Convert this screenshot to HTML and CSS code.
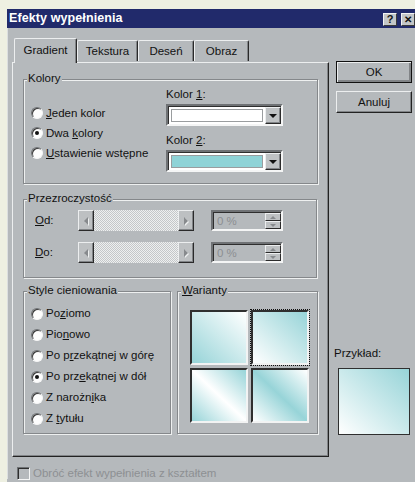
FILE: index.html
```html
<!DOCTYPE html>
<html lang="pl">
<head>
<meta charset="utf-8">
<title>Efekty wypełnienia</title>
<link rel="stylesheet" href="styles.css">
</head>
<body>
<div class="window">
  <div class="titlebar">
    <span class="title">Efekty wypełnienia</span>
    <span class="caption-btns">
      <span class="cbtn">?</span>
      <span class="cbtn close">✕</span>
    </span>
  </div>

  <div class="client">
    <div class="main">
      <div class="left">
        <div class="tabs">
          <div class="tab tab-gradient active">Gradient</div>
          <div class="tab tab-texture">Tekstura</div>
          <div class="tab tab-pattern">Deseń</div>
          <div class="tab tab-picture">Obraz</div>
        </div>

        <div class="panel">
          <div class="group colors">
            <span class="legend">Kolory</span>
            <div class="radios">
              <div class="opt"><span class="radio"></span><span><u>J</u>eden kolor</span></div>
              <div class="opt"><span class="radio on"></span><span>Dwa <u>k</u>olory</span></div>
              <div class="opt"><span class="radio"></span><span><u>U</u>stawienie wstępne</span></div>
            </div>
            <div class="pickers">
              <div class="pick-label">Kolor <u>1</u>:</div>
              <div class="combo">
                <div class="swatch white"></div>
                <div class="drop"><span class="tri-down"></span></div>
              </div>
              <div class="pick-label second">Kolor <u>2</u>:</div>
              <div class="combo">
                <div class="swatch cyan"></div>
                <div class="drop"><span class="tri-down"></span></div>
              </div>
            </div>
          </div>

          <div class="group transparency">
            <span class="legend">Przezroczystość</span>
            <div class="trow">
              <span class="tlabel"><u>O</u>d:</span>
              <div class="slider">
                <span class="sbtn"><span class="tri-left"></span></span>
                <span class="track"></span>
                <span class="sbtn"><span class="tri-right"></span></span>
              </div>
              <div class="spin">
                <span class="spin-text">0 %</span>
                <span class="spin-btns">
                  <span class="spbtn"><span class="tri-up"></span></span>
                  <span class="spbtn"><span class="tri-dn"></span></span>
                </span>
              </div>
            </div>
            <div class="trow">
              <span class="tlabel"><u>D</u>o:</span>
              <div class="slider">
                <span class="sbtn"><span class="tri-left"></span></span>
                <span class="track"></span>
                <span class="sbtn"><span class="tri-right"></span></span>
              </div>
              <div class="spin">
                <span class="spin-text">0 %</span>
                <span class="spin-btns">
                  <span class="spbtn"><span class="tri-up"></span></span>
                  <span class="spbtn"><span class="tri-dn"></span></span>
                </span>
              </div>
            </div>
          </div>

          <div class="bottom-row">
            <div class="group styles">
              <span class="legend">Style cieniowania</span>
              <div class="opt"><span class="radio"></span><span>Po<u>z</u>iomo</span></div>
              <div class="opt"><span class="radio"></span><span>Pio<u>n</u>owo</span></div>
              <div class="opt"><span class="radio"></span><span>Po p<u>r</u>zekątnej w górę</span></div>
              <div class="opt"><span class="radio on"></span><span>Po prz<u>e</u>kątnej w dół</span></div>
              <div class="opt"><span class="radio"></span><span>Z narożn<u>i</u>ka</span></div>
              <div class="opt"><span class="radio"></span><span>Z <u>t</u>ytułu</span></div>
            </div>
            <div class="group variants">
              <span class="legend"><u>W</u>arianty</span>
              <div class="tiles">
                <div class="cell"><div class="tile v1"></div></div>
                <div class="cell selected"><div class="tile v2"></div></div>
                <div class="cell"><div class="tile v3"></div></div>
                <div class="cell"><div class="tile v4"></div></div>
              </div>
            </div>
          </div>
        </div>
      </div>

      <div class="side">
        <div class="btn default">OK</div>
        <div class="btn">Anuluj</div>
        <div class="sample-label">Przykład:</div>
        <div class="sample"></div>
      </div>
    </div>

    <div class="check-row">
      <span class="checkbox"></span>
      <span class="disabled-text">Obróć efekt wypełnienia z kształtem</span>
    </div>
  </div>
</div>
</body>
</html>
```

FILE: styles.css
```css
html, body {
  margin: 0;
  height: 100%;
  overflow: hidden;
}

body {
  background: #eef0e2;
  padding: 9px 0 0 7px;
  box-sizing: border-box;
  font-family: "Liberation Sans", Arial, sans-serif;
  font-size: 11.5px;
  line-height: 13px;
  color: #111;
}

u { text-decoration: underline; text-underline-offset: 1px; }

.window {
  width: 410px;
  height: 480px;
  background: #b5b9bc;
}

/* caption bar */
.titlebar {
  height: 19px;
  background: #212a6b;
  display: flex;
  align-items: center;
  justify-content: space-between;
  padding: 0 2px 0 2px;
}

.title {
  color: #fff;
  font-weight: bold;
  font-size: 12.5px;
  letter-spacing: 0.1px;
}

.caption-btns {
  display: flex;
  gap: 4px;
  margin-top: 1px;
}

.cbtn {
  width: 14px;
  height: 13px;
  box-sizing: border-box;
  background: #c3c6c8;
  border: 1px solid;
  border-color: #f2f3f3 #3a3a3a #3a3a3a #f2f3f3;
  display: flex;
  align-items: center;
  justify-content: center;
  font-weight: bold;
  font-size: 11px;
  color: #111;
}

.cbtn.close { font-size: 10px; }

/* dialog client area */
.client {
  border-left: 1px solid #dcdfe0;
  padding: 10px 0 0 4px;
  height: 451px;
  box-sizing: border-box;
}

.main {
  display: flex;
  gap: 5px;
}

.left { width: 317px; }

/* tab strip */
.tabs {
  display: flex;
  align-items: flex-end;
  height: 24px;
  padding-left: 2px;
  position: relative;
  z-index: 1;
}

.tab {
  box-sizing: border-box;
  height: 21px;
  margin-bottom: 1px;
  border: 1px solid;
  border-bottom: none;
  border-color: #eceeef #2a2a2a #2a2a2a #eceeef;
  box-shadow: inset -1px 0 #818487;
  border-radius: 2px 2px 0 0;
  display: flex;
  align-items: center;
  justify-content: center;
  padding-top: 1px;
  background: #b5b9bc;
}

.tab.active {
  height: 25px;
  margin-bottom: -1px;
  padding-bottom: 2px;
}

.tab-gradient { width: 63px; }
.tab-texture { width: 61px; }
.tab-pattern { width: 56px; }
.tab-picture { width: 55px; }

.panel {
  box-sizing: border-box;
  height: 395px;
  border: 1px solid;
  border-color: #eceeef #222 #222 #eceeef;
  box-shadow: inset -1px -1px #818487;
  padding: 16px 0 0 10px;
}

/* etched group boxes */
.group {
  position: relative;
  box-sizing: border-box;
  border: 1px solid #85888b;
  box-shadow: inset 1px 1px #eef0f0, 1px 1px #eef0f0;
}

.legend {
  position: absolute;
  top: -8px;
  left: 3px;
  padding: 0 1px;
  background: #b5b9bc;
}

.colors {
  width: 295px;
  height: 105px;
  display: flex;
}

.radios {
  width: 135px;
  padding: 23px 0 0 7px;
}

.opt {
  height: 20px;
  display: flex;
  align-items: center;
  gap: 3px;
}

.radio {
  position: relative;
  width: 12px;
  height: 12px;
  box-sizing: border-box;
  border-radius: 50%;
  background: #fdfdfd;
  border: 1px solid;
  border-color: #6f7275 #f6f7f7 #f6f7f7 #6f7275;
  box-shadow: inset 1px 1px #3a3a3a;
}

.radio.on::after {
  content: "";
  position: absolute;
  left: 3px;
  top: 3px;
  width: 4px;
  height: 4px;
  border-radius: 50%;
  background: #111;
}

.pickers {
  padding-top: 8px;
}

.pick-label.second { margin-top: 8px; }

.combo {
  margin-top: 3px;
  width: 117px;
  height: 22px;
  box-sizing: border-box;
  border: 2px solid;
  border-color: #6f7275 #f4f5f5 #f4f5f5 #6f7275;
  box-shadow: inset 1px 1px #2e2e2e;
  background: #fff;
  display: flex;
  padding: 2px 0 0 2px;
}

.swatch {
  flex: 1;
  margin: 1px 2px 2px 1px;
  border: 1px solid #9a9d9f;
}

.swatch.white { background: #fff; }
.swatch.cyan { background: #8fd3d7; }

.drop {
  width: 16px;
  height: 17px;
  box-sizing: border-box;
  margin-top: -1px;
  background: #bfc2c4;
  border: 1px solid;
  border-color: #eceeef #2a2a2a #2a2a2a #eceeef;
  box-shadow: inset -1px -1px #818487;
  display: flex;
  align-items: center;
  justify-content: center;
}

.tri-down {
  width: 0;
  height: 0;
  border-left: 4px solid transparent;
  border-right: 4px solid transparent;
  border-top: 4px solid #111;
  margin-top: 1px;
}

/* transparency sliders */
.transparency {
  margin-top: 15px;
  width: 294px;
  height: 79px;
  padding: 10px 0 0 11px;
}

.trow {
  display: flex;
  align-items: center;
  height: 21px;
  margin-bottom: 11px;
}

.tlabel { width: 43px; }

.slider {
  width: 116px;
  height: 21px;
  display: flex;
}

.sbtn {
  width: 16px;
  height: 21px;
  box-sizing: border-box;
  background: #bdc0c2;
  border: 1px solid;
  border-color: #eceeef #2a2a2a #2a2a2a #eceeef;
  box-shadow: inset -1px -1px #818487;
  display: flex;
  align-items: center;
  justify-content: center;
}

.track {
  flex: 1;
  background-color: #dcdedf;
  background-image: conic-gradient(#eef0f0 25%, #c4c7c9 0 50%, #eef0f0 0 75%, #c4c7c9 0);
  background-size: 2px 2px;
}

.tri-left, .tri-right {
  width: 0;
  height: 0;
  border-top: 4px solid transparent;
  border-bottom: 4px solid transparent;
}
.tri-left { border-right: 4px solid #878a8d; filter: drop-shadow(1px 1px 0 #eef0f0); }
.tri-right { border-left: 4px solid #878a8d; filter: drop-shadow(1px 1px 0 #eef0f0); }

.spin {
  margin-left: 17px;
  width: 72px;
  height: 21px;
  box-sizing: border-box;
  border: 2px solid;
  border-color: #6f7275 #f4f5f5 #f4f5f5 #6f7275;
  box-shadow: inset 1px 1px #2e2e2e;
  background: #b5b9bc;
  display: flex;
  justify-content: space-between;
}

.spin-text {
  color: #8c8f92;
  padding: 3px 0 0 4px;
}

.spin-btns {
  display: flex;
  flex-direction: column;
  width: 16px;
  margin: 1px 0 0 0;
}

.spbtn {
  height: 8px;
  box-sizing: border-box;
  background: #bdc0c2;
  border: 1px solid;
  border-color: #eceeef #2a2a2a #2a2a2a #eceeef;
  display: flex;
  align-items: center;
  justify-content: center;
}

.tri-up, .tri-dn {
  width: 0;
  height: 0;
  border-left: 3px solid transparent;
  border-right: 3px solid transparent;
}
.tri-up { border-bottom: 3px solid #878a8d; }
.tri-dn { border-top: 3px solid #878a8d; }

/* shading styles and variants */
.bottom-row {
  margin-top: 13px;
  display: flex;
  gap: 6px;
}

.styles {
  width: 148px;
  height: 143px;
  padding: 11px 0 0 7px;
}

.styles .opt { height: 21px; }

.variants {
  width: 141px;
  height: 143px;
  padding: 17px 0 0 11px;
}

.tiles {
  display: grid;
  grid-template-columns: 60px 60px;
  grid-template-rows: 57px 57px;
  gap: 1px;
}

.cell {
  padding: 1px;
}

.cell.selected {
  outline: 1px dotted #111;
  outline-offset: -1px;
}

.tile {
  height: 100%;
  box-sizing: border-box;
  border: 2px solid;
  border-color: #2f2f2f #f2f3f3 #f2f3f3 #2f2f2f;
}

/* diagonal-down variants: bands run top-left to bottom-right */
.v1 { background: linear-gradient(to bottom left, #fff 0%, #97d4d8 100%); }
.v2 { background: linear-gradient(to bottom left, #97d4d8 0%, #fff 100%); }
.v3 { background: linear-gradient(to bottom left, #97d4d8 0%, #fff 50%, #97d4d8 100%); }
.v4 { background: linear-gradient(to bottom left, #fff 0%, #97d4d8 50%, #fff 100%); }

/* command buttons and sample */
.side {
  width: 80px;
  padding-top: 23px;
}

.btn {
  margin-left: 2px;
  width: 76px;
  height: 22px;
  box-sizing: border-box;
  background: #b5b9bc;
  border: 1px solid;
  border-color: #eceeef #222 #222 #eceeef;
  box-shadow: inset -1px -1px #818487;
  display: flex;
  align-items: center;
  justify-content: center;
  margin-bottom: 8px;
}

.btn.default {
  border: 1px solid #111;
  box-shadow: inset 1px 1px #eceeef, inset -2px -2px #818487;
}

.sample-label {
  margin-top: 234px;
}

.sample {
  margin: 8px 0 0 4px;
  width: 72px;
  height: 67px;
  box-sizing: border-box;
  border: 1px solid #2f2f2f;
  background: linear-gradient(to bottom left, #97d4d8 0%, #fff 100%);
}

/* bottom checkbox */
.check-row {
  display: flex;
  align-items: center;
  gap: 3px;
  margin: 10px 0 0 5px;
}

.checkbox {
  width: 13px;
  height: 13px;
  box-sizing: border-box;
  border: 1px solid;
  border-color: #6f7275 #f4f5f5 #f4f5f5 #6f7275;
  box-shadow: inset 1px 1px #2e2e2e;
}

.disabled-text {
  color: #8d9093;
}
```
